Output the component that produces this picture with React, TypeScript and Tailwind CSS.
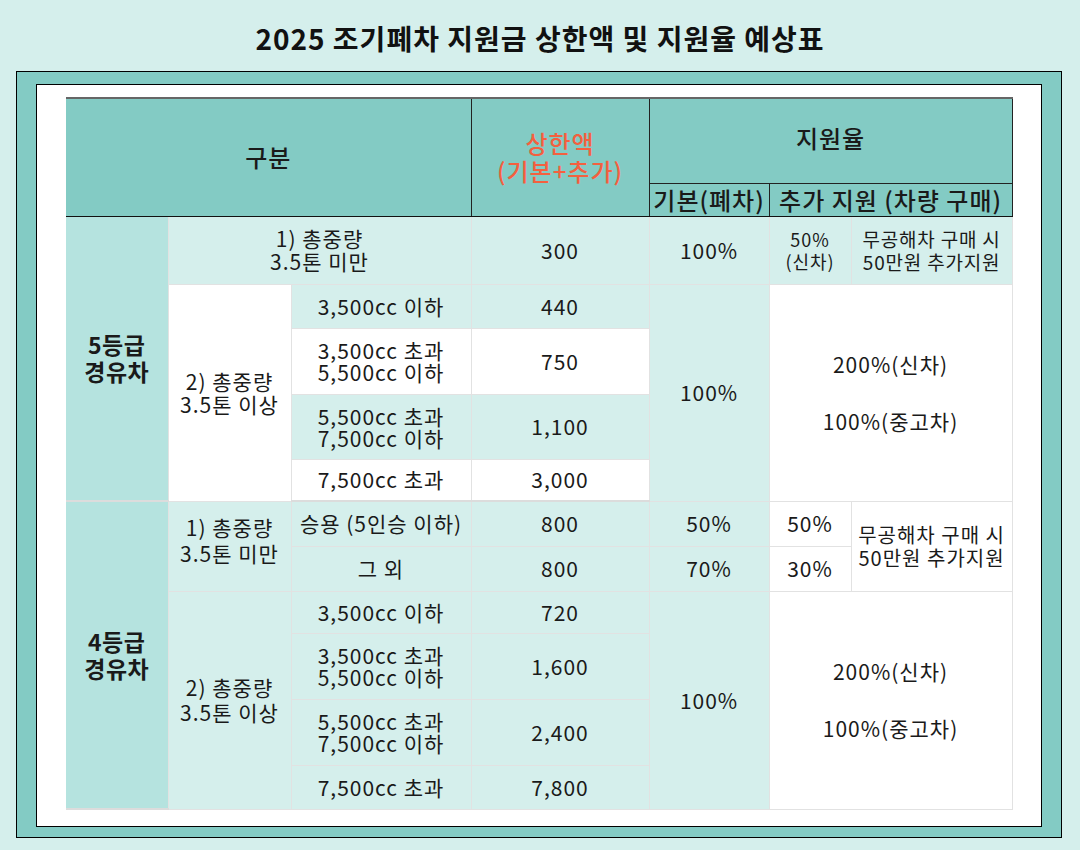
import React from 'react';

const H = 'bg-[#83cbc4] font-medium text-[24px] tracking-[1px] leading-[28px] text-center align-middle';
const MINT = 'bg-[#d5efec] border border-[#e2e2e2] text-center align-middle';
const WHITE = 'bg-white border border-[#e2e2e2] text-center align-middle';
const GRADE = 'bg-[#b5e3df] border-b-2 border-[#dcdcdc] text-center align-middle font-bold text-[23px] tracking-[0.5px] leading-[27px]';

export default function App() {
  return (
    <div className="w-[1080px] h-[850px] bg-[#d5efec] text-[#1a1a1a] font-['Noto_Sans_CJK_KR',sans-serif]">
      <h1 className="h-[71px] pt-[18px] text-center text-[28px] tracking-[1px] font-bold leading-[40px] text-[#111]">
        2025 조기폐차 지원금 상한액 및 지원율 예상표
      </h1>
      <div className="ml-[16px] w-[1046px] h-[767px] border border-black bg-[#83cbc4] pt-[12px] pl-[19px]">
        <div className="w-[1006px] h-[743px] border border-black bg-white pt-[12px] pl-[29px]">
          <table className="table-fixed border-collapse w-[946px] text-[21px] tracking-[1px] leading-[23px]">
            <colgroup>
              <col className="w-[102px]" />
              <col className="w-[123px]" />
              <col className="w-[180px]" />
              <col className="w-[178px]" />
              <col className="w-[120px]" />
              <col className="w-[82px]" />
              <col className="w-[161px]" />
            </colgroup>
            <thead>
              <tr className="h-[85px]">
                <th rowSpan={2} colSpan={3} className={`${H} border-t-2 border-t-[#666] border-r border-r-[#222] border-b border-b-[#111]`}>
                  구분
                </th>
                <th rowSpan={2} className={`${H} text-[#f4603f] border-t-2 border-t-[#666] border-r border-r-[#222] border-b border-b-[#111]`}>
                  상한액
                  <br />
                  (기본+추가)
                </th>
                <th colSpan={3} className={`${H} pb-[6px] border-t-2 border-t-[#666] border-b border-b-[#222] border-r border-r-[#222]`}>
                  지원율
                </th>
              </tr>
              <tr className="h-[33px]">
                <th className={`${H} border-r border-r-[#222] border-b border-b-[#111]`}>기본(폐차)</th>
                <th colSpan={2} className={`${H} border-b border-b-[#111] border-r border-r-[#222]`}>
                  추가 지원 (차량 구매)
                </th>
              </tr>
            </thead>
            <tbody>
              {/* 5등급 */}
              <tr className="h-[68px]">
                <td rowSpan={5} className={GRADE}>
                  5등급
                  <br />
                  경유차
                </td>
                <td colSpan={2} className={MINT}>
                  1) 총중량
                  <br />
                  3.5톤 미만
                </td>
                <td className={MINT}>300</td>
                <td className={MINT}>100%</td>
                <td className={`${MINT} text-[18px] leading-[22px]`}>
                  50%
                  <br />
                  (신차)
                </td>
                <td className={`${MINT} text-[19px] leading-[23px] tracking-[0.8px]`}>
                  무공해차 구매 시
                  <br />
                  50만원 추가지원
                </td>
              </tr>
              <tr className="h-[44px]">
                <td rowSpan={4} className={WHITE}>
                  2) 총중량
                  <br />
                  3.5톤 이상
                </td>
                <td className={MINT}>3,500cc 이하</td>
                <td className={MINT}>440</td>
                <td rowSpan={4} className={MINT}>100%</td>
                <td rowSpan={4} colSpan={2} className={WHITE}>
                  <div className="flex flex-col items-center gap-[34px]">
                    <span>200%(신차)</span>
                    <span>100%(중고차)</span>
                  </div>
                </td>
              </tr>
              <tr className="h-[66px]">
                <td className={`${WHITE} leading-[22px]`}>
                  3,500cc 초과
                  <br />
                  5,500cc 이하
                </td>
                <td className={WHITE}>750</td>
              </tr>
              <tr className="h-[65px]">
                <td className={`${MINT} leading-[22px]`}>
                  5,500cc 초과
                  <br />
                  7,500cc 이하
                </td>
                <td className={MINT}>1,100</td>
              </tr>
              <tr className="h-[42px]">
                <td className={`${WHITE} border-b-2 border-b-[#dcdcdc]`}>7,500cc 초과</td>
                <td className={`${WHITE} border-b-2 border-b-[#dcdcdc]`}>3,000</td>
              </tr>

              {/* 4등급 */}
              <tr className="h-[45px]">
                <td rowSpan={6} className={GRADE}>
                  4등급
                  <br />
                  경유차
                </td>
                <td rowSpan={2} className={`${MINT} pb-[12px] leading-[26px]`}>
                  1) 총중량
                  <br />
                  3.5톤 미만
                </td>
                <td className={MINT}>승용 (5인승 이하)</td>
                <td className={MINT}>800</td>
                <td className={MINT}>50%</td>
                <td className={WHITE}>50%</td>
                <td rowSpan={2} className={`${WHITE} text-[20px] leading-[23px] tracking-[1px]`}>
                  무공해차 구매 시
                  <br />
                  50만원 추가지원
                </td>
              </tr>
              <tr className="h-[45px]">
                <td className={MINT}>그 외</td>
                <td className={MINT}>800</td>
                <td className={MINT}>70%</td>
                <td className={WHITE}>30%</td>
              </tr>
              <tr className="h-[42px]">
                <td rowSpan={4} className={`${MINT} leading-[25px]`}>
                  2) 총중량
                  <br />
                  3.5톤 이상
                </td>
                <td className={MINT}>3,500cc 이하</td>
                <td className={MINT}>720</td>
                <td rowSpan={4} className={MINT}>100%</td>
                <td rowSpan={4} colSpan={2} className={WHITE}>
                  <div className="flex flex-col items-center gap-[34px]">
                    <span>200%(신차)</span>
                    <span>100%(중고차)</span>
                  </div>
                </td>
              </tr>
              <tr className="h-[66px]">
                <td className={`${MINT} leading-[22px]`}>
                  3,500cc 초과
                  <br />
                  5,500cc 이하
                </td>
                <td className={MINT}>1,600</td>
              </tr>
              <tr className="h-[66px]">
                <td className={`${MINT} leading-[22px]`}>
                  5,500cc 초과
                  <br />
                  7,500cc 이하
                </td>
                <td className={MINT}>2,400</td>
              </tr>
              <tr className="h-[44px]">
                <td className={MINT}>7,500cc 초과</td>
                <td className={MINT}>7,800</td>
              </tr>
            </tbody>
          </table>
        </div>
      </div>
    </div>
  );
}
